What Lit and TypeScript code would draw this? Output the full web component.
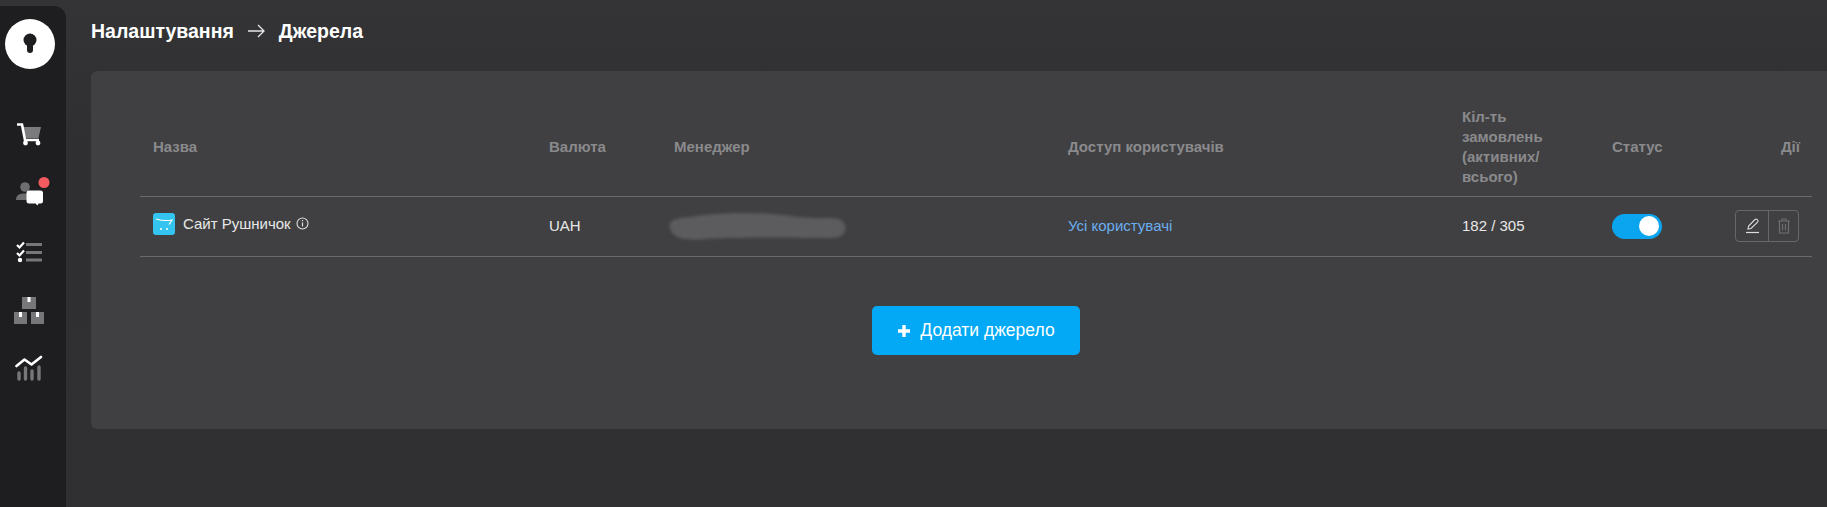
import { LitElement, html, css, svg } from "lit";
import { customElement } from "lit/decorators.js";

const cart = svg`<svg width="26" height="24" viewBox="0 0 26 24"><path d="M6 4h19l-2.500 11H8.500z" fill="#7b7b7e"/><path d="M1 1.500h5l3 15.500h14" fill="none" stroke="#fff" stroke-width="2.600"/><circle cx="9.500" cy="20" r="2.400" fill="#fff"/><circle cx="22" cy="20" r="2.400" fill="#fff"/></svg>`;
const chat = svg`<svg width="36" height="32" viewBox="0 0 36 32"><circle cx="9" cy="10" r="4.800" fill="#6e6e71"/><path d="M0 23c0-5 3-6.500 9-6.500s6 2 6 6.500z" fill="#6e6e71"/><path d="M10.500 16a2.500 2.500 0 0 1 2.500-2.500h11.500a2.500 2.500 0 0 1 2.500 2.500v8a2.500 2.500 0 0 1-2.500 2.500h-2l-1 2-2-2h-6.500a2.500 2.500 0 0 1-2.500-2.500z" fill="#fff"/><circle cx="28" cy="5.500" r="5.500" fill="#f25b5f"/></svg>`;
const tasks = svg`<svg width="26" height="22" viewBox="0 0 26 22"><g fill="none" stroke="#fff" stroke-width="2.200"><path d="M1 4l2.500 2.500 4.500-5"/><path d="M1 12l2.500 2.500 4.500-5"/></g><circle cx="4" cy="19" r="2.200" fill="#fff"/><g fill="#77777a"><rect x="10" y="2" width="16" height="3"/><rect x="10" y="10" width="16" height="3"/><rect x="10" y="17.500" width="16" height="3"/></g></svg>`;
const boxes = svg`<svg width="30" height="27" viewBox="0 0 30 27"><g fill="#77777a"><rect x="8" y="0" width="14" height="12"/><rect x="0" y="15" width="13" height="12"/><rect x="17" y="15" width="13" height="12"/></g><g fill="#fff"><rect x="13.500" y="0" width="3" height="5"/><rect x="5" y="15" width="3" height="5"/><rect x="22" y="15" width="3" height="5"/></g></svg>`;
const chart = svg`<svg width="28" height="26" viewBox="0 0 28 26"><g stroke="#77777a" stroke-width="3.400" stroke-linecap="round"><path d="M4 18v6"/><path d="M10.500 13v11"/><path d="M17 16v8"/><path d="M24 12v12"/></g><path d="M1.500 11l8-6.500 7 5 9.500-7.500" fill="none" stroke="#fff" stroke-width="2.600" stroke-linecap="round" stroke-linejoin="round"/></svg>`;

@customElement("app-root")
export class AppRoot extends LitElement {
  static styles = css`
    :host { display: block; width: 1827px; height: 507px; overflow: hidden; font-family: "Liberation Sans", Arial, sans-serif; }
    .page { display: flex; height: 507px; background: linear-gradient(180deg, #343436 0%, #2f2f31 30%, #303032 100%); }
    .side { width: 66px; margin-top: 6px; flex: none; background: #1e1e20; border-top-right-radius: 12px; display: flex; flex-direction: column; padding-top: 13px; box-sizing: border-box; }
    .logo { width: 50px; height: 50px; margin-left: 5px; flex: none; }
    .nav { display: flex; flex-direction: column; margin-top: 37px; }
    .nav div { height: 58.300px; width: 57px; display: flex; align-items: center; justify-content: center; }
    .nav .chat { margin-left: 5px; }
    .main { flex: 1; min-width: 0; padding: 0 0 0 25px; }
    .crumbs { height: 71px; display: flex; align-items: flex-start; padding-top: 21px; box-sizing: border-box; color: #fff; font-size: 19.500px; font-weight: 700; line-height: 21px; gap: 14px; }
    .crumbs svg { margin-top: 3px; }
    .card { height: 358px; background: #404042; border-radius: 6px 0 0 6px; padding: 25px 15px 0 49px; box-sizing: border-box; }
    .row { display: grid; grid-template-columns: 396px 125px 394px 394px 150px 136px 1fr; }
    .head { height: 98px; padding-top: 2px; border-bottom: 1px solid #69696b; align-items: center; color: #8a8a8d; font-size: 15px; font-weight: 700; line-height: 20px; box-sizing: content-box; }
    .head > div, .body > div { padding-left: 13px; box-sizing: border-box; }
    .head > .acts { text-align: right; padding-right: 12px; padding-left: 0; }
    .body { height: 59px; border-bottom: 1px solid #69696b; align-items: center; color: #e8e8e8; font-size: 15px; line-height: 20px; }
    .body > div { margin-top: -1px; }
    .body > .name { display: flex; align-items: center; gap: 8px; margin-top: -6px; }
    .shop { width: 22px; height: 22px; flex: none; }
    .info { margin-left: -3px; }
    .link { color: #6aaef0; }
    .blur { display: block; margin-left: -20px; margin-top: -2px; }
    .toggle { width: 50px; height: 25px; border-radius: 13px; background: #0ba5ef; display: flex; align-items: center; justify-content: flex-end; padding-right: 3px; box-sizing: border-box; }
    .knob { width: 20px; height: 20px; border-radius: 50%; background: #fff; }
    .body > .actcell { padding: 0 13px 0 0; display: flex; justify-content: flex-end; }
    .actions { display: flex; width: 64px; height: 32px; border: 1px solid #67676a; border-radius: 4px; box-sizing: border-box; }
    .actions span { flex: 1; display: flex; align-items: center; justify-content: center; }
    .actions span:first-child { flex: none; width: 32px; border-right: 1px solid #67676a; }
    .foot { display: flex; justify-content: center; padding-top: 49px; }
    .add { width: 208px; height: 49px; border: 0; border-radius: 5px; background: #03a9f4; color: #fff; font: 400 17.500px "Liberation Sans", Arial, sans-serif; display: flex; align-items: center; justify-content: center; gap: 9px; padding: 0; }
  `;

  render() {
    return html`<div class="page">
      <aside class="side">
        <svg class="logo" viewBox="0 0 50 50"><circle cx="25" cy="25" r="25" fill="#fff"/><circle cx="25" cy="21" r="6.500" fill="#1e1e20"/><rect x="22" y="22" width="6" height="12" rx="3" fill="#1e1e20"/></svg>
        <nav class="nav">
          <div>${cart}</div><div class="chat">${chat}</div><div>${tasks}</div><div>${boxes}</div><div>${chart}</div>
        </nav>
      </aside>
      <main class="main">
        <div class="crumbs"><span>Налаштування</span>
          <svg width="17" height="14" viewBox="0 0 17 14"><path d="M0 7h16M10 1l6 6-6 6" fill="none" stroke="#e6e6e6" stroke-width="1.300"/></svg>
          <span>Джерела</span></div>
        <section class="card">
          <div class="row head">
            <div>Назва</div><div>Валюта</div><div>Менеджер</div><div>Доступ користувачів</div>
            <div>Кіл-ть<br>замовлень<br>(активних/<br>всього)</div><div>Статус</div><div class="acts">Дії</div>
          </div>
          <div class="row body">
            <div class="name">
              <svg class="shop" viewBox="0 0 22 22"><rect width="22" height="22" rx="3" fill="#35c3ef"/><path d="M3 6c5 1.500 11 2 16 1-1 2-2 3-3 4.500" fill="none" stroke="#fff" stroke-width="1.100"/><circle cx="8" cy="16" r="1" fill="#fff"/><circle cx="14" cy="16" r="1" fill="#fff"/></svg>
              <span>Сайт Рушничок</span>
              <svg class="info" width="13" height="13" viewBox="0 0 13 13"><circle cx="6.500" cy="6.500" r="5.500" fill="none" stroke="#ddd" stroke-width="1.100"/><path d="M6.500 5.500v4M6.500 3v1.300" stroke="#ddd" stroke-width="1.200"/></svg>
            </div>
            <div>UAH</div>
            <div>
              <svg class="blur" width="214" height="44" viewBox="0 0 190 44" preserveAspectRatio="none"><defs><filter id="b" x="-10%" y="-30%" width="120%" height="160%"><feGaussianBlur stdDeviation="1.500"/></filter></defs><path d="M14 22c0-5 6-7 18-8 20-4 60-6 90-1 12 2 20 2 34 2 10 0 14 4 14 10s-4 10-14 10c-20 0-90-1-110 1-20 2-32-1-32-14z" fill="#5c5c5e" filter="url(#b)"/></svg>
            </div>
            <div class="link">Усі користувачі</div>
            <div>182 / 305</div>
            <div><div class="toggle"><div class="knob"></div></div></div>
            <div class="actcell"><div class="actions">
              <span><svg width="15" height="16" viewBox="0 0 15 16"><path d="M3 11l.6-3L10 1.500c.7-.6 1.500-.6 2 0l.6.6c.6.600.6 1.300 0 2L6 10.500z" fill="none" stroke="#ddd" stroke-width="1.100"/><path d="M1 14.500h13" stroke="#ddd" stroke-width="1.200"/></svg></span>
              <span><svg width="14" height="16" viewBox="0 0 14 16"><path d="M1 3h12M5 3V1h4v2M2.500 3v12h9V3M5.500 6v6.500M8.500 6v6.500" fill="none" stroke="#6f6f72" stroke-width="1.200"/></svg></span>
            </div></div>
          </div>
          <div class="foot">
            <button class="add"><svg width="14" height="14" viewBox="0 0 14 14"><path d="M7 1v12M1 7h12" stroke="#fff" stroke-width="3.400"/></svg>Додати джерело</button>
          </div>
        </section>
      </main>
    </div>`;
  }
}
